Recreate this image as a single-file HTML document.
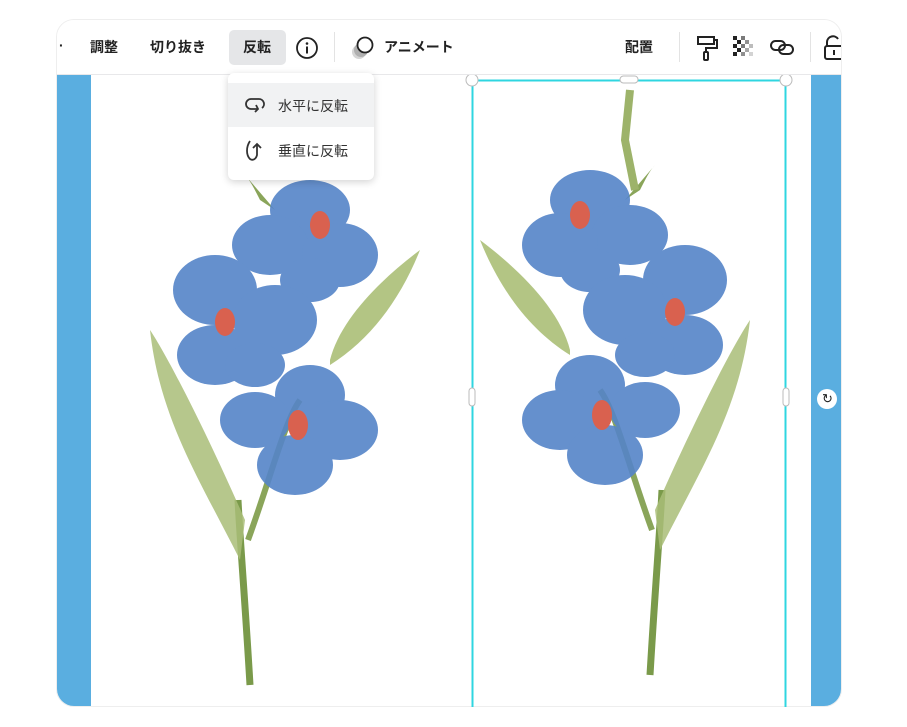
<!DOCTYPE html>
<html><head><meta charset="utf-8"><style>
body{margin:0;width:907px;height:727px;background:#fff;position:relative;overflow:hidden;font-family:"Liberation Sans","Noto Sans CJK JP",sans-serif;}
.frame{position:absolute;left:56px;top:19px;width:786px;height:688px;border-radius:18px;overflow:hidden;background:#fff;border:1px solid #eee;box-sizing:border-box}
.tb{position:absolute;left:0;top:0;width:100%;height:54px;background:#fff;border-bottom:1px solid #e8e8ea;z-index:3}
.t{position:absolute;top:17px;font-size:14px;font-weight:bold;color:#222}
.menu{position:absolute;left:228px;top:73px;width:146px;height:107px;background:#fff;border-radius:6px;box-shadow:0 2px 8px rgba(0,0,0,.18);z-index:5}
.mi{position:absolute;left:0;width:146px;height:44px;font-size:14px;color:#333}
.mi span{position:absolute;left:50px;top:13px}
</style></head><body>
<div class="frame">
<div class="tb">
<div class="t" style="left:2px">·</div>
<div class="t" style="left:33px">調整</div>
<div class="t" style="left:93px">切り抜き</div>
<div style="position:absolute;left:172px;top:10px;width:57px;height:35px;background:#e5e6e8;border-radius:5px"></div>
<div class="t" style="left:186px">反転</div>
<svg style="position:absolute;left:238px;top:16px" width="24" height="24" viewBox="0 0 24 24"><circle cx="12" cy="12" r="10" fill="none" stroke="#222" stroke-width="1.8"/><circle cx="12" cy="7.5" r="1.3" fill="#222"/><path d="M12 10.5v7" stroke="#222" stroke-width="2"/></svg>
<div style="position:absolute;left:277px;top:12px;width:1px;height:30px;background:#e3e3e3"></div>
<svg style="position:absolute;left:292px;top:14px" width="28" height="28" viewBox="0 0 28 28"><circle cx="10" cy="18" r="7" fill="#d5d5d5"/><circle cx="12" cy="16" r="7" fill="#b0b0b0"/><circle cx="16" cy="11" r="7.5" fill="#fff" stroke="#222" stroke-width="1.8"/></svg>
<div class="t" style="left:327px">アニメート</div>
<div class="t" style="left:568px">配置</div>
<div style="position:absolute;left:622px;top:12px;width:1px;height:30px;background:#e3e3e3"></div>
<svg style="position:absolute;left:638px;top:14px" width="26" height="28" viewBox="0 0 26 28"><path d="M3 3h16v7H3zM19 6h3v8H11v4" fill="none" stroke="#222" stroke-width="2"/><rect x="9" y="18" width="4" height="8" rx="1" fill="none" stroke="#222" stroke-width="2"/></svg>
<svg style="position:absolute;left:676px;top:16px" width="22" height="24" viewBox="0 0 22 24"><g fill="#222"><rect x="0" y="0" width="4" height="4"/><rect x="8" y="0" width="4" height="4" opacity=".6"/><rect x="4" y="4" width="4" height="4"/><rect x="12" y="4" width="4" height="4" opacity=".5"/><rect x="0" y="8" width="4" height="4"/><rect x="8" y="8" width="4" height="4" opacity=".6"/><rect x="16" y="8" width="4" height="4" opacity=".3"/><rect x="4" y="12" width="4" height="4"/><rect x="12" y="12" width="4" height="4" opacity=".4"/><rect x="0" y="16" width="4" height="4"/><rect x="8" y="16" width="4" height="4" opacity=".5"/><rect x="16" y="16" width="4" height="4" opacity=".2"/></g></svg>
<svg style="position:absolute;left:712px;top:16px" width="26" height="22" viewBox="0 0 26 22"><rect x="2" y="5" width="14" height="9" rx="4.5" fill="none" stroke="#222" stroke-width="2"/><rect x="10" y="9" width="14" height="9" rx="4.5" fill="none" stroke="#222" stroke-width="2"/></svg>
<div style="position:absolute;left:753px;top:12px;width:1px;height:30px;background:#e3e3e3"></div>
<svg style="position:absolute;left:766px;top:14px" width="22" height="28" viewBox="0 0 22 28"><path d="M4 12V8a6 6 0 0 1 11-3" fill="none" stroke="#222" stroke-width="2"/><rect x="2" y="12" width="18" height="13" rx="2" fill="none" stroke="#222" stroke-width="2"/><path d="M11 16v5" stroke="#222" stroke-width="2"/></svg>
</div>
<div style="position:absolute;left:0;top:54px;width:34px;height:640px;background:#5aaee0"></div>
<div style="position:absolute;left:754px;top:54px;width:32px;height:640px;background:#5aaee0"></div>
<div style="position:absolute;left:760px;top:369px;width:20px;height:20px;border-radius:50%;background:#fff"></div>
<div style="position:absolute;left:765px;top:371px;font-size:13px;color:#222">↻</div>
</div>

<svg style="position:absolute;left:0;top:0" width="907" height="727" viewBox="0 0 907 727">
<defs>
<g id="fl">
<path d="M250 685 C245 600 240 540 238 500" stroke="#7a9a4a" stroke-width="7" fill="none"/>
<path d="M240 560 C200 480 160 420 150 330 C170 360 210 440 245 520Z" fill="#a9bd78" opacity=".85"/>
<path d="M248 540 C270 480 285 420 300 400" stroke="#8aa55a" stroke-width="6" fill="none"/>
<path d="M330 360 C340 320 380 280 420 250 C400 300 370 340 330 365Z" fill="#b3c584"/>
<path d="M260 200 C255 190 250 180 245 175 L275 210Z" fill="#8aa55a"/>
<g fill="#5584c8" opacity=".9">
<ellipse cx="310" cy="210" rx="40" ry="30"/><ellipse cx="270" cy="245" rx="38" ry="30"/><ellipse cx="340" cy="255" rx="38" ry="32"/><ellipse cx="310" cy="280" rx="30" ry="22"/>
<ellipse cx="215" cy="290" rx="42" ry="35"/><ellipse cx="275" cy="320" rx="42" ry="35"/><ellipse cx="215" cy="355" rx="38" ry="30"/><ellipse cx="255" cy="365" rx="30" ry="22"/>
<ellipse cx="310" cy="395" rx="35" ry="30"/><ellipse cx="255" cy="420" rx="35" ry="28"/><ellipse cx="340" cy="430" rx="38" ry="30"/><ellipse cx="295" cy="465" rx="38" ry="30"/>
</g>
<g fill="#d9614f"><ellipse cx="320" cy="225" rx="10" ry="14"/><ellipse cx="225" cy="322" rx="10" ry="14"/><ellipse cx="298" cy="425" rx="10" ry="15"/></g>
</g>
</defs>
<use href="#fl"/>
<use href="#fl" transform="translate(900,-10) scale(-1,1)"/>
<path d="M630 90 L625 140 L635 190" stroke="#9db36a" stroke-width="8" fill="none"/>
<rect x="472.5" y="80.5" width="313" height="640" fill="none" stroke="#2fd6e0" stroke-width="2"/>
<circle cx="472" cy="80" r="6" fill="#fff" stroke="#bbb"/><circle cx="786" cy="80" r="6" fill="#fff" stroke="#bbb"/>
<rect x="620" y="76" width="18" height="7" rx="3.5" fill="#fff" stroke="#bbb"/>
<rect x="469" y="388" width="6" height="18" rx="3" fill="#fff" stroke="#bbb"/><rect x="783" y="388" width="6" height="18" rx="3" fill="#fff" stroke="#bbb"/>
<rect x="0" y="707" width="907" height="20" fill="#fff"/>
</svg>

<div class="menu">
<div class="mi" style="top:10px;background:#f1f2f3"><svg style="position:absolute;left:16px;top:13px" width="22" height="18" viewBox="0 0 22 18"><path d="M13 13H7a5 5 0 0 1 0-10h8a5 5 0 0 1 3 9" fill="none" stroke="#333" stroke-width="1.8"/><path d="M12 9l2 4-3 3" fill="none" stroke="#333" stroke-width="1.8"/></svg><span>水平に反転</span></div>
<div class="mi" style="top:55px"><svg style="position:absolute;left:16px;top:11px" width="20" height="24" viewBox="0 0 20 24"><path d="M6 2C2 8 2 16 6 20c3 2 6 0 7-4V6" fill="none" stroke="#333" stroke-width="1.8"/><path d="M9 9l4-4 4 4" fill="none" stroke="#333" stroke-width="1.8"/></svg><span>垂直に反転</span></div>
</div>
</body></html>
